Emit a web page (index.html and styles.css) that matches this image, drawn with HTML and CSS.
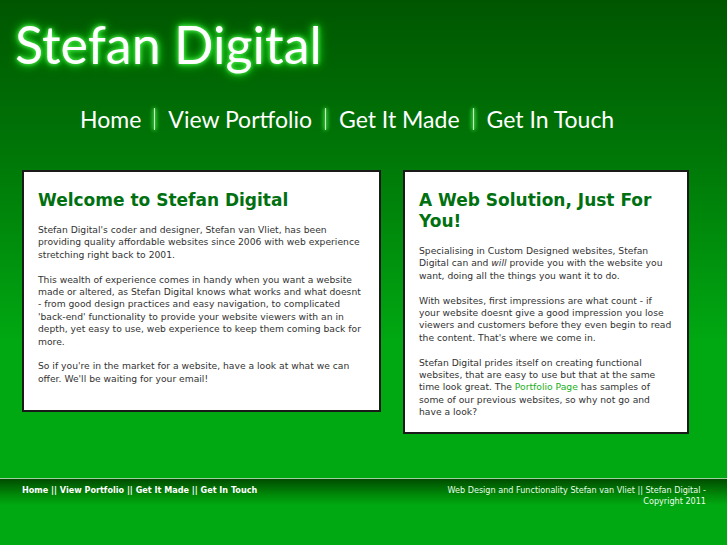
FILE: index.html
```html
<!DOCTYPE html>
<html>
<head>
<meta charset="utf-8">
<title>Stefan Digital</title>
<link rel="stylesheet" href="styles.css">
</head>
<body>
<div class="page">
  <header class="header">
    <h1 class="logo">Stefan Digital</h1>
    <nav class="nav">
      <a href="#" class="nav-link">Home</a>
      <span class="sep"></span>
      <a href="#" class="nav-link">View Portfolio</a>
      <span class="sep"></span>
      <a href="#" class="nav-link">Get It Made</a>
      <span class="sep"></span>
      <a href="#" class="nav-link">Get In Touch</a>
    </nav>
  </header>
  <main class="content">
    <section class="box box-left">
      <h2 class="box-title">Welcome to Stefan Digital</h2>
      <p>Stefan Digital's coder and designer, Stefan van Vliet, has been providing quality affordable websites since 2006 with web experience stretching right back to 2001.</p>
      <p>This wealth of experience comes in handy when you want a website made or altered, as Stefan Digital knows what works and what doesnt - from good design practices and easy navigation, to complicated 'back-end' functionality to provide your website viewers with an in depth, yet easy to use, web experience to keep them coming back for more.</p>
      <p>So if you're in the market for a website, have a look at what we can offer. We'll be waiting for your email!</p>
    </section>
    <section class="box box-right">
      <h2 class="box-title">A Web Solution, Just For You!</h2>
      <p>Specialising in Custom Designed websites, Stefan Digital can and <em>will</em> provide you with the website you want, doing all the things you want it to do.</p>
      <p>With websites, first impressions are what count - if your website doesnt give a good impression you lose viewers and customers before they even begin to read the content. That's where we come in.</p>
      <p>Stefan Digital prides itself on creating functional websites, that are easy to use but that at the same time look great. The <a href="#" class="inline-link">Portfolio Page</a> has samples of some of our previous websites, so why not go and have a look?</p>
    </section>
  </main>
  <footer class="footer">
    <div class="footer-nav">
      <a href="#">Home</a> || <a href="#">View Portfolio</a> || <a href="#">Get It Made</a> || <a href="#">Get In Touch</a>
    </div>
    <div class="footer-copy">Web Design and Functionality Stefan van Vliet || Stefan Digital -<br>Copyright 2011</div>
  </footer>
</div>
</body>
</html>
```
FILE: styles.css
```css
html, body {
  margin: 0;
  padding: 0;
}
body {
  width: 727px;
  height: 545px;
  overflow: hidden;
  background: #00a812 linear-gradient(#005600 0px, #007a08 170px, #00a812 340px) no-repeat;
  font-family: "DejaVu Sans", Verdana, sans-serif;
}
.page {
  width: 727px;
}
.header {
  height: 170px;
}
.logo {
  margin: 0;
  padding: 14px 0 0 15px;
  height: 66px;
  font-family: "Lato", "Open Sans", sans-serif;
  font-weight: 400;
  font-size: 52px;
  line-height: 60px;
  color: #ffffff;
  text-shadow: 0 0 4px #60ff60, 0 0 8px #20e020, 0 0 12px #10c010;
}
.nav {
  display: flex;
  align-items: center;
  padding: 25px 0 0 80px;
  height: 28px;
}
.nav-link {
  font-family: "Lato", "Open Sans", sans-serif;
  font-size: 23px;
  color: #ffffff;
  text-decoration: none;
  line-height: 28px;
}
.sep {
  width: 3px;
  height: 22px;
  margin: 0 12px;
  background: linear-gradient(to right, rgba(120,255,120,0), #b0ffb0 50%, rgba(120,255,120,0));
  box-shadow: 0 0 4px #40ff40;
  border-radius: 2px;
}
.content {
  display: flex;
  align-items: flex-start;
  gap: 22px;
  padding: 0 0 0 22px;
  height: 308px;
}
.box {
  background: #ffffff;
  border: 2px solid #1a1a1a;
  box-sizing: border-box;
  padding: 18px 14px 13px 14px;
  color: #333333;
  font-size: 9.2px;
  line-height: 12.4px;
}
.box-left {
  width: 359px;
  height: 242px;
}
.box-right {
  width: 286px;
}
.box-title {
  margin: 0 0 13px 0;
  font-size: 17px;
  line-height: 21px;
  font-weight: bold;
  color: #007010;
}
.box p {
  margin: 0 0 12.4px 0;
}
.box p:last-child {
  margin-bottom: 0;
}
.inline-link {
  color: #20b020;
  text-decoration: none;
}
.footer {
  border-top: 1px solid #9fd09f;
  background: linear-gradient(#004c00 0px, #008a08 16px, #00a812 26px, #00a812 100%);
  height: 66px;
  display: flex;
  justify-content: space-between;
  padding: 6px 21px 0 22px;
  box-sizing: border-box;
  font-size: 8.1px;
  line-height: 11px;
  color: #ffffff;
}
.footer-nav {
  font-weight: bold;
}
.footer-nav a {
  color: #ffffff;
  text-decoration: none;
}
.footer-copy {
  text-align: right;
  color: #e8ffe8;
}
```
